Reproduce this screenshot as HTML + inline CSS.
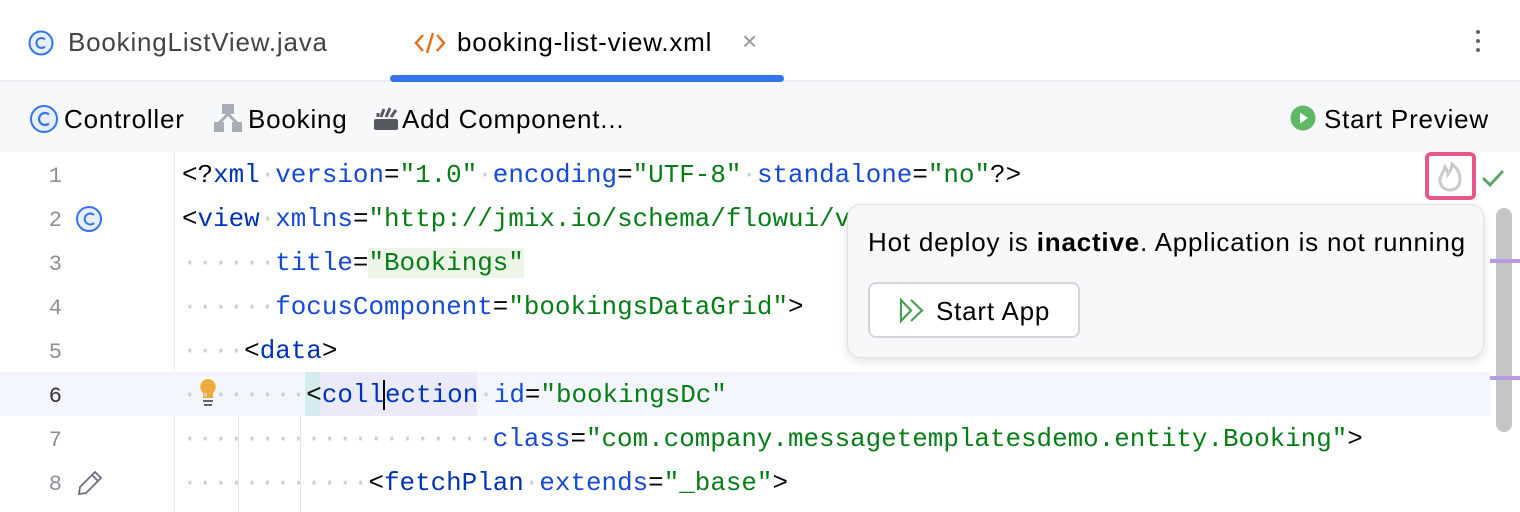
<!DOCTYPE html>
<html><head><style>
*{margin:0;padding:0;box-sizing:border-box}
body{width:1520px;height:512px;overflow:hidden;background:#fff;font-family:"Liberation Sans",sans-serif;position:relative}
.abs{position:absolute}
.tabs{left:0;top:0;width:1520px;height:82px;background:#fff;border-bottom:2px solid #ebecf0}
.tb{left:0;top:82px;width:1520px;height:70px;background:#f7f8fa}
.t{font-size:26px;letter-spacing:0.8px;color:#000;white-space:nowrap}
.code{font-family:"Liberation Mono",monospace;font-size:25.9px;white-space:pre;line-height:44px}
.ln{font-family:"Liberation Mono",monospace;font-size:22px;color:#8c8f96;width:62px;text-align:right;line-height:44px}
.k{color:#0033b3}.a{color:#174ad4}.s{color:#067d17}.d{color:#d0d0d0}
</style></head><body>
<div class="abs tabs"></div>
<svg class="abs" style="left:28px;top:30px" width="26" height="26"><circle cx="13" cy="13" r="11.5" fill="#e7effd" stroke="#3574f0" stroke-width="2"/><path d="M17 9.5a5 5 0 1 0 0 7" fill="none" stroke="#3574f0" stroke-width="2"/></svg>
<div class="abs t" style="left:68px;top:27px;color:#444">BookingListView.java</div>
<svg class="abs" style="left:414px;top:30px" width="32" height="26"><path d="M9 5L2 13l7 8M23 5l7 8-7 8M19 3l-6 20" fill="none" stroke="#e66d17" stroke-width="2.4"/></svg>
<div class="abs t" style="left:457px;top:27px">booking-list-view.xml</div>
<div class="abs" style="left:742px;top:26px;font-size:26px;color:#999">×</div>
<div class="abs" style="left:1476px;top:30px;width:4px"><div style="width:4px;height:4px;background:#666;border-radius:2px;margin-bottom:5px"></div><div style="width:4px;height:4px;background:#666;border-radius:2px;margin-bottom:5px"></div><div style="width:4px;height:4px;background:#666;border-radius:2px"></div></div>
<div class="abs" style="left:390px;top:75px;width:394px;height:7px;background:#3574f0;border-radius:4px"></div>
<div class="abs tb"></div>
<svg class="abs" style="left:29px;top:104px" width="30" height="30"><circle cx="15" cy="15" r="13" fill="#e7effd" stroke="#3574f0" stroke-width="2"/><path d="M20 10.5a6 6 0 1 0 0 9" fill="none" stroke="#3574f0" stroke-width="2.2"/></svg>
<div class="abs t" style="left:64px;top:104px">Controller</div>
<svg class="abs" style="left:213px;top:103px" width="30" height="30"><rect x="9" y="1" width="12" height="10" fill="#a8adb5"/><path d="M15 11L5 21M15 11l10 10" stroke="#a8adb5" stroke-width="3"/><rect x="1" y="19" width="10" height="10" fill="#a8adb5"/><rect x="19" y="19" width="10" height="10" fill="#a8adb5"/></svg>
<div class="abs t" style="left:248px;top:104px">Booking</div>
<svg class="abs" style="left:373px;top:105px" width="28" height="26"><rect x="1" y="14" width="24" height="11" rx="2" fill="#55585e"/><path d="M8 12l3-8M13 12l4-9M18 12l5-7M5 12l0-4" stroke="#55585e" stroke-width="3"/></svg>
<div class="abs t" style="left:402px;top:104px">Add Component...</div>
<svg class="abs" style="left:1290px;top:105px" width="26" height="26"><circle cx="13" cy="13" r="12.5" fill="#5fb865"/><path d="M10 7.5l8 5.5-8 5.5z" fill="#fff"/></svg>
<div class="abs t" style="left:1324px;top:104px">Start Preview</div>
<!-- gutter -->
<div class="abs" style="left:174px;top:152px;width:1px;height:360px;background:#ebecf0"></div>
<div class="abs" style="left:0;top:372px;width:1490px;height:44px;background:#f3f6fc"></div>
<div class="abs" style="left:305px;top:372px;width:15px;height:44px;background:#d4ecec"></div>
<div class="abs" style="left:320px;top:372px;width:157px;height:44px;background:#ebeafa"></div>
<div class="abs" style="left:238px;top:416px;width:1px;height:96px;background:#e6e6e6"></div>
<div class="abs" style="left:300px;top:416px;width:1px;height:96px;background:#e6e6e6"></div>
<div class="abs ln" style="left:0;top:155px">1<br>2<br>3<br>4<br>5<br><span style="color:#333">6</span><br>7<br>8</div>
<svg class="abs" style="left:75px;top:205px" width="28" height="28"><circle cx="14" cy="14" r="12" fill="#e7effd" stroke="#3574f0" stroke-width="2"/><path d="M19 10a5.5 5.5 0 1 0 0 8" fill="none" stroke="#3574f0" stroke-width="2"/></svg>
<svg class="abs" style="left:196px;top:378px" width="24" height="32"><path d="M12 1a8 8 0 0 0-5 14v5h10v-5a8 8 0 0 0-5-14z" fill="#f2aa3a"/><rect x="7" y="22" width="10" height="2" fill="#666"/><rect x="8" y="26" width="8" height="2" fill="#666"/></svg>
<svg class="abs" style="left:76px;top:469px" width="28" height="28"><path d="M3 25l1-7L19 3l6 6L10 24z M16 6l6 6" fill="none" stroke="#6c707e" stroke-width="1.8"/></svg>
<div class="abs code" style="left:182px;top:153px;color:#080808"><span>&lt;?</span><span class="k">xml</span><span class="d">·</span><span class="a">version</span>=<span class="s">"1.0"</span><span class="d">·</span><span class="a">encoding</span>=<span class="s">"UTF-8"</span><span class="d">·</span><span class="a">standalone</span>=<span class="s">"no"</span>?&gt;
&lt;<span class="k">view</span><span class="d">·</span><span class="a">xmlns</span>=<span class="s">"http://jmix.io/schema/flowui/v</span>
<span class="d">······</span><span class="a">title</span>=<span class="s" style="background:#edf5e8;color:#067d17">"Bookings"</span>
<span class="d">······</span><span class="a">focusComponent</span>=<span class="s">"bookingsDataGrid"</span>&gt;
<span class="d">····</span>&lt;<span class="k">data</span>&gt;
<span class="d">········</span>&lt;<span class="k">coll<span style="border-left:2px solid #000;margin-left:-1px">e</span>ction</span><span class="d">·</span><span class="a">id</span>=<span class="s">"bookingsDc"</span>
<span class="d">····················</span><span class="a">class</span>=<span class="s">"com.company.messagetemplatesdemo.entity.Booking"</span>&gt;
<span class="d">············</span>&lt;<span class="k">fetchPlan</span><span class="d">·</span><span class="a">extends</span>=<span class="s">"_base"</span>&gt;</div>
<!-- right -->
<div class="abs" style="left:1425px;top:152px;width:51px;height:48px;border:4px solid #e8578a;border-radius:6px;background:#fff"></div>
<svg class="abs" style="left:1436px;top:162px" width="28" height="30"><path d="M14 28c-6 0-10-4-10-10 0-5 4-8 5-13 2 3 3 5 3 7 2-3 4-6 4-10 5 4 8 9 8 15 0 7-4 11-10 11z" fill="none" stroke="#c9cacc" stroke-width="3"/></svg>
<svg class="abs" style="left:1481px;top:168px" width="24" height="20"><path d="M2 10l7 7L22 3" fill="none" stroke="#59a869" stroke-width="3"/></svg>
<div class="abs" style="left:1496px;top:208px;width:16px;height:224px;background:#c4c5c8;border-radius:8px"></div>
<div class="abs" style="left:1490px;top:259px;width:30px;height:4px;background:#b79be0"></div>
<div class="abs" style="left:1490px;top:376px;width:30px;height:4px;background:#b79be0"></div>
<div class="abs" style="left:847px;top:204px;width:637px;height:154px;background:#f7f8fa;border:1px solid #dfe1e5;border-radius:14px;box-shadow:0 3px 10px rgba(0,0,0,.12)"></div>
<div class="abs t" style="left:868px;top:227px">Hot deploy is <b>inactive</b>. Application is not running</div>
<div class="abs" style="left:868px;top:282px;width:212px;height:56px;background:#fff;border:2px solid #d3d5db;border-radius:8px"></div>
<svg class="abs" style="left:898px;top:297px" width="30" height="28"><path d="M3 3l10 10.5L3 24zM13 3l11 10.5L13 24" fill="none" stroke="#499c54" stroke-width="2.2"/></svg>
<div class="abs t" style="left:936px;top:296px">Start App</div>
</body></html>
